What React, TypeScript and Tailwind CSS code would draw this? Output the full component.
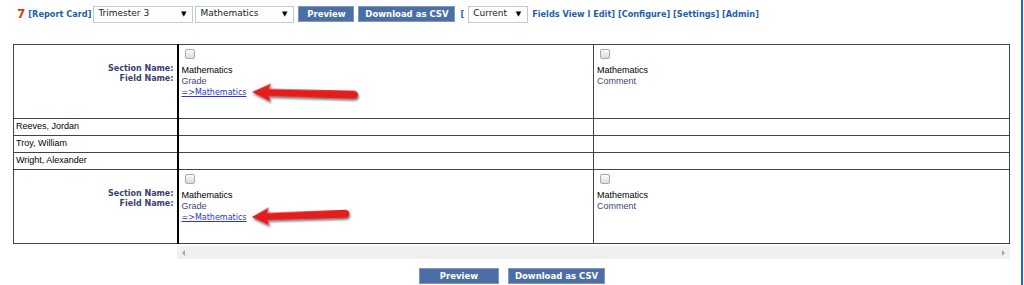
import React from 'react'

const verdana = "font-['DejaVu_Sans',Verdana,sans-serif]"
const arial = "font-['Liberation_Sans',Arial,sans-serif]"

const students = ['Reeves, Jordan', 'Troy, William', 'Wright, Alexander']

const FakeSelect = ({ label, width }: { label: string; width: string }) => (
  <div
    className={`flex h-[17px] items-center justify-between border border-[#b9c9de] bg-white pl-[4px] pr-[6px] text-[9px] font-normal text-[#222] ${width} ${verdana}`}
  >
    <span>{label}</span>
    <span className="text-[7px] text-black">▼</span>
  </div>
)

const Button = ({ label, width }: { label: string; width: string }) => (
  <button
    className={`flex h-[16px] items-center justify-center border border-[#7f98c0] bg-[#4b6ea5] text-[8.5px] font-bold text-white ${width} ${verdana}`}
  >
    {label}
  </button>
)

const Arrow = ({ tilt }: { tilt: 'down' | 'up' }) => (
  <svg
    className="absolute left-[71px] top-[36px]"
    width="116"
    height="24"
    viewBox="0 0 116 24"
  >
    <defs>
      <filter id={`shadow-${tilt}`} x="-10%" y="-40%" width="130%" height="180%">
        <feDropShadow dx="1" dy="2" stdDeviation="1.2" floodColor="#000" floodOpacity="0.55" />
      </filter>
    </defs>
    <g
      filter={`url(#shadow-${tilt})`}
      transform={tilt === 'down' ? 'rotate(1.5 2 11)' : 'rotate(-2 2 11) scale(0.92 1)'}
    >
      <path
        d="M2 11 L21 2 L18.5 7.5 L103 7 Q108 7 108 11 Q108 15 103 15 L18.5 14.5 L21 20 Z"
        fill="#e41b1b"
      />
    </g>
  </svg>
)

const HeaderRow = ({ tilt }: { tilt: 'down' | 'up' }) => (
  <tr className="h-[74px]">
    <td className="border border-[#444] border-r-2 border-r-black pr-[3px] pt-[19px] align-top">
      <div className={`text-right text-[8px] font-bold leading-[10px] text-[#3d3f6e] ${verdana}`}>
        <div>Section Name:</div>
        <div>Field Name:</div>
      </div>
    </td>
    <td className="relative border border-[#444] pl-[3px] pt-[4px] align-top">
      <div className="mb-[6px] ml-[3px] h-[10px] w-[10px] rounded-[2px] border border-[#aaa] bg-gradient-to-b from-[#fafafa] to-[#dcdcdc]" />
      <div className={`text-[9px] leading-[11px] text-black ${arial}`}>Mathematics</div>
      <div className={`text-[9px] leading-[11px] text-[#45457a] ${arial}`}>Grade</div>
      <a className={`block text-[8px] leading-[11px] text-[#2b36cc] underline ${verdana}`}>
        =&gt;Mathematics
      </a>
      <Arrow tilt={tilt} />
    </td>
    <td className="border border-[#444] pl-[3px] pt-[4px] align-top">
      <div className="mb-[6px] ml-[3px] h-[10px] w-[10px] rounded-[2px] border border-[#aaa] bg-gradient-to-b from-[#fafafa] to-[#dcdcdc]" />
      <div className={`text-[9px] leading-[11px] text-black ${arial}`}>Mathematics</div>
      <div className={`text-[9px] leading-[11px] text-[#45457a] ${arial}`}>Comment</div>
    </td>
  </tr>
)

export default function App() {
  return (
    <div className="flex h-[285px] w-[1024px] bg-white">
      <div className="flex-1">
        {/* Toolbar */}
        <div className={`flex items-center pl-[17px] pt-[5px] text-[8.2px] font-bold text-[#1f5fa8] ${verdana}`}>
          <span className="mr-[3px] text-[12px] text-[#d33a1a]">7</span>
          <span className="mr-[2px]">[Report Card]</span>
          <FakeSelect label="Trimester 3" width="w-[100px]" />
          <div className="w-[2px]" />
          <FakeSelect label="Mathematics" width="w-[99px]" />
          <div className="flex gap-[4px] pl-[4px]">
            <Button label="Preview" width="w-[56px]" />
            <Button label="Download as CSV" width="w-[97px]" />
          </div>
          <span className="ml-[5px] mr-[4px]">[</span>
          <FakeSelect label="Current" width="w-[60px]" />
          <span className="ml-[4px] whitespace-nowrap">
            Fields View l Edit] [Configure] [Settings] [Admin]
          </span>
        </div>

        {/* Grid */}
        <div className="pl-[13px] pt-[21px]">
          <table className="w-[997px] table-fixed border-collapse">
            <colgroup>
              <col className="w-[164px]" />
              <col className="w-[416px]" />
              <col className="w-[416px]" />
            </colgroup>
            <tbody>
              <HeaderRow tilt="down" />
              {students.map((name) => (
                <tr key={name} className="h-[17px]">
                  <td className={`border border-[#444] border-r-2 border-r-black pl-[2px] text-[9px] text-black ${arial}`}>
                    {name}
                  </td>
                  <td className="border border-[#444]" />
                  <td className="border border-[#444]" />
                </tr>
              ))}
              <HeaderRow tilt="up" />
            </tbody>
          </table>

          {/* Horizontal scrollbar */}
          <div className="ml-[164px] mt-[2px] flex h-[13px] w-[833px] items-center justify-between bg-[#f0f0f0] px-[5px]">
            <span className="h-0 w-0 border-y-[3px] border-r-[3px] border-y-transparent border-r-[#a3a3a3]" />
            <span className="h-0 w-0 border-y-[3px] border-l-[3px] border-y-transparent border-l-[#a3a3a3]" />
          </div>
        </div>

        {/* Bottom buttons */}
        <div className="mt-[9px] flex justify-center gap-[9px] pl-[3px]">
          <Button label="Preview" width="w-[80px]" />
          <Button label="Download as CSV" width="w-[97px]" />
        </div>
      </div>
      <div className="w-[2px] bg-[#1c6cc6]" />
      <div className="w-[1px]" />
    </div>
  )
}
